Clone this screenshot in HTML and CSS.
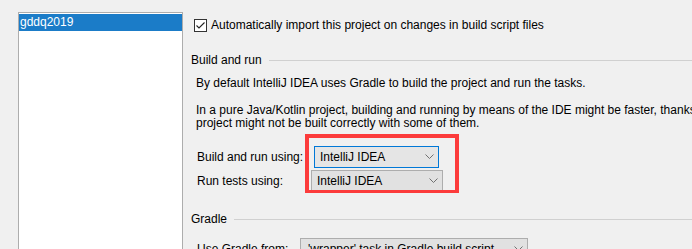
FILE: index.html
```html
<!DOCTYPE html>
<html lang="en">
<head>
    <meta charset="UTF-8">
    <meta name="viewport" content="width=device-width, initial-scale=1.0">
    <title>Gradle Settings</title>
    <link rel="stylesheet" href="styles.css">
</head>
<body>
    <section class="settings">
        <div class="project-list">
            <div class="project-item selected">gddq2019</div>
        </div>
        <div class="panel">
            <label class="check-row">
                <span class="checkbox">
                    <svg width="13" height="13" viewBox="0 0 13 13">
                        <rect x="0.5" y="0.5" width="12" height="12" fill="#fff" stroke="#333"/>
                        <polyline points="2.5,6.5 5,9 10.5,3.5" fill="none" stroke="#222" stroke-width="1.1"/>
                    </svg>
                </span>
                Automatically import this project on changes in build script files
            </label>

            <div class="group-title"><span>Build and run</span><div class="rule"></div></div>
            <p class="note">By default IntelliJ IDEA uses Gradle to build the project and run the tasks.</p>
            <p class="note note-wrap">In a pure Java/Kotlin project, building and running by means of the IDE might be faster, thanks to optimizations. Note, that the IDE doesn't support all Gradle plugins and the<br>project might not be built correctly with some of them.</p>

            <div class="field field-build">
                <span class="field-label">Build and run using:</span>
                <div class="combo focused">
                    <span>IntelliJ IDEA</span>
                    <svg width="9" height="5" viewBox="0 0 9 5"><polyline points="0.5,0.5 4.5,4.5 8.5,0.5" fill="none" stroke="#707070"/></svg>
                </div>
            </div>
            <div class="field field-tests">
                <span class="field-label">Run tests using:</span>
                <div class="combo">
                    <span>IntelliJ IDEA</span>
                    <svg width="9" height="5" viewBox="0 0 9 5"><polyline points="0.5,0.5 4.5,4.5 8.5,0.5" fill="none" stroke="#707070"/></svg>
                </div>
            </div>

            <div class="group-title gradle-title"><span>Gradle</span><div class="rule"></div></div>
            <div class="field field-gradle">
                <span class="field-label">Use Gradle from:</span>
                <div class="combo">
                    <span>'wrapper' task in Gradle build script</span>
                    <svg width="9" height="5" viewBox="0 0 9 5"><polyline points="0.5,0.5 4.5,4.5 8.5,0.5" fill="none" stroke="#707070"/></svg>
                </div>
            </div>
        </div>
    </section>
    <div class="highlight"></div>
</body>
</html>
```

FILE: styles.css
```css
html, body {
    margin: 0;
    overflow: hidden;
}
body {
    width: 692px;
    height: 249px;
    background: #f0f0f0;
    font-family: "Liberation Sans", Arial, sans-serif;
    font-size: 12px;
    color: #000;
    position: relative;
}
.settings {
    display: flex;
}
.project-list {
    margin-top: 12px;
    margin-left: 18px;
    width: 165px;
    height: 260px;
    box-sizing: border-box;
    border: 1px solid #adadad;
    background: #fff;
    padding-top: 1px;
    flex-shrink: 0;
}
.project-item {
    height: 17px;
    line-height: 17px;
    padding-left: 1px;
}
.project-item.selected {
    background: #1b7cc8;
    color: #fff;
}
.panel {
    flex: 1;
    min-width: 0;
    margin-left: 8px;
    padding-top: 18px;
}
.check-row {
    display: flex;
    align-items: center;
    height: 15px;
    line-height: 15px;
    margin-left: 3px;
    white-space: nowrap;
}
.checkbox {
    display: flex;
    margin-right: 4px;
}
.group-title {
    display: flex;
    line-height: 14px;
    margin-top: 20px;
    white-space: nowrap;
}
.group-title .rule {
    flex: 1;
    height: 1px;
    background: #d0d0d0;
    margin-top: 7px;
    margin-left: 7px;
}
.note {
    margin: 9px 0 0;
    padding-left: 5px;
    line-height: 14px;
    white-space: nowrap;
}
.note-wrap {
    margin-top: 14px;
    line-height: 13px;
}
.field {
    display: flex;
    align-items: center;
    padding-left: 6px;
    white-space: nowrap;
}
.combo {
    box-sizing: border-box;
    display: flex;
    align-items: center;
    justify-content: space-between;
    height: 21px;
    padding: 0 4px 0 5px;
    border: 1px solid #adadad;
    background: #e1e1e1;
}
.combo.focused {
    border-color: #0078d7;
    background: #e5e5e5;
}
.field-build {
    margin-top: 16px;
}
.field-build .field-label {
    width: 117px;
}
.field-build .combo {
    width: 125px;
    height: 22px;
    padding-bottom: 1px;
}
.field-tests {
    margin-top: 2px;
}
.field-tests .field-label {
    width: 114px;
}
.field-tests .combo {
    width: 132px;
}
.gradle-title {
    margin-top: 21px;
}
.field-gradle {
    margin-top: 12px;
}
.field-gradle .field-label {
    width: 103px;
}
.field-gradle .combo {
    width: 228px;
    padding-left: 7px;
}
.highlight {
    position: absolute;
    left: 305px;
    top: 134px;
    width: 154px;
    height: 59px;
    box-sizing: border-box;
    border: 4px solid #fc3b3b;
    border-bottom-width: 3px;
}
```
